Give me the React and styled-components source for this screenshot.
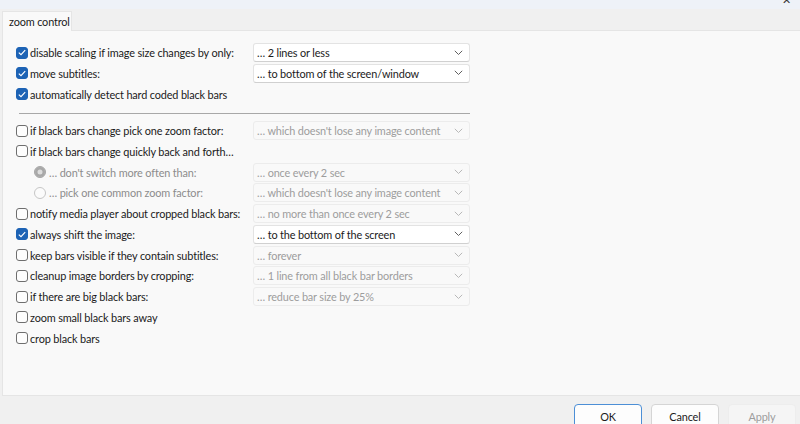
import React from 'react'
import styled, { createGlobalStyle } from 'styled-components'

const GlobalStyle = createGlobalStyle`
  html, body { margin: 0; padding: 0; }
  body {
    width: 800px;
    height: 424px;
    overflow: hidden;
    background: #f0f0f0;
    font-family: Lato, "Liberation Sans", sans-serif;
    font-size: 10.9px;
    letter-spacing: -0.15px;
    color: #1b1b1b;
  }
`

const rows = [
    { id: 0, kind: 'check', checked: true, label: 'disable scaling if image size changes by only:', value: '… 2 lines or less' },
    { id: 1, kind: 'check', checked: true, label: 'move subtitles:', value: '… to bottom of the screen/window' },
    { id: 2, kind: 'check', checked: true, label: 'automatically detect hard coded black bars' },
    { id: 3, kind: 'sep' },
    { id: 4, kind: 'check', label: 'if black bars change pick one zoom factor:', value: "… which doesn't lose any image content", disabled: true },
    { id: 5, kind: 'check', label: 'if black bars change quickly back and forth…' },
    { id: 6, kind: 'radio', checked: true, label: "… don't switch more often than:", value: '… once every 2 sec', disabled: true },
    { id: 7, kind: 'radio', label: '… pick one common zoom factor:', value: "… which doesn't lose any image content", disabled: true },
    { id: 8, kind: 'check', label: 'notify media player about cropped black bars:', value: '… no more than once every 2 sec', disabled: true },
    { id: 9, kind: 'check', checked: true, label: 'always shift the image:', value: '… to the bottom of the screen' },
    { id: 10, kind: 'check', label: 'keep bars visible if they contain subtitles:', value: '… forever', disabled: true },
    { id: 11, kind: 'check', label: 'cleanup image borders by cropping:', value: '… 1 line from all black bar borders', disabled: true },
    { id: 12, kind: 'check', label: 'if there are big black bars:', value: '… reduce bar size by 25%', disabled: true },
    { id: 13, kind: 'check', label: 'zoom small black bars away' },
    { id: 14, kind: 'check', label: 'crop black bars' },
]

function Chevron({ disabled }) {
    return (
        <svg width="9" height="6" viewBox="0 0 9 6">
            <path d="M0.8 0.8 L4.5 4.5 L8.2 0.8" fill="none" stroke={disabled ? '#b8b8b8' : '#5f5f5f'} strokeWidth="1" />
        </svg>
    )
}

function App() {
    return (
        <>
            <GlobalStyle />
            <Window>
                <TitleBar>
                    <Close>✕</Close>
                </TitleBar>
                <Tabs>
                    <Tab>zoom control</Tab>
                </Tabs>
                <Panel>
                    <Form>
                        {
                            rows.map((row) => {
                                const { id, kind, checked, label, value, disabled } = row
                                if (kind === 'sep') return <Separator key={id} />
                                return (
                                    <Row key={id}>
                                        <Label $indent={kind === 'radio'} $disabled={kind === 'radio'}>
                                            {kind === 'radio'
                                                ? <Radio $checked={checked} />
                                                : <Check $checked={checked}>
                                                    {checked && (
                                                        <svg width="8" height="7" viewBox="0 0 8 7">
                                                            <path d="M0.8 3.6 L3 5.6 L7.2 1.2" fill="none" stroke="#fff" strokeWidth="1.2" />
                                                        </svg>
                                                    )}
                                                </Check>}
                                            <span>{label}</span>
                                        </Label>
                                        {value && (
                                            <Select $disabled={disabled}>
                                                <span>{value}</span>
                                                <Chevron disabled={disabled} />
                                            </Select>
                                        )}
                                    </Row>
                                )
                            })
                        }
                    </Form>
                </Panel>
                <Footer>
                    <Button $default>OK</Button>
                    <Button>Cancel</Button>
                    <Button $disabled>Apply</Button>
                </Footer>
            </Window>
        </>
    )
}

export default App

const Window = styled.div`
    width: 800px;
    height: 424px;
    display: flex;
    flex-direction: column;
    overflow: hidden;
`

const TitleBar = styled.div`
    height: 9px;
    flex-shrink: 0;
    background: #eef2f8;
    position: relative;
    overflow: hidden;
`

const Close = styled.span`
    position: absolute;
    right: 9px;
    top: -6px;
    font-size: 11px;
    line-height: 11px;
    color: #333;
`

const Tabs = styled.div`
    height: 21px;
    flex-shrink: 0;
    display: flex;
    align-items: flex-end;
    padding-left: 2px;
`

const Tab = styled.div`
    width: 70px;
    height: 20px;
    box-sizing: border-box;
    background: #f9f9f9;
    border: 1px solid #e5e5e5;
    border-bottom: none;
    padding-left: 6px;
    line-height: 19px;
    white-space: nowrap;
    margin-bottom: -1px;
    position: relative;
    z-index: 1;
`

const Panel = styled.div`
    flex: 1;
    margin-left: 2px;
    background: #f9f9f9;
    border: 1px solid #e5e5e5;
    border-right: none;
    padding: 12px 0 0 13px;
`

const Form = styled.div`
    width: 454px;
    display: flex;
    flex-direction: column;
    gap: 1.75px;
`

const Row = styled.div`
    display: grid;
    grid-template-columns: 237px 217px;
    height: 19px;
    align-items: center;
`

const Label = styled.label`
    display: flex;
    align-items: center;
    gap: 2px;
    padding-left: ${p => p.$indent ? '18px' : '0'};
    color: ${p => p.$disabled ? '#8c8c8c' : '#1b1b1b'};
    white-space: nowrap;
`

const Check = styled.span`
    flex-shrink: 0;
    width: 12px;
    height: 12px;
    box-sizing: border-box;
    border-radius: 3px;
    display: inline-flex;
    align-items: center;
    justify-content: center;
    background: ${p => p.$checked ? '#1d63b5' : '#fdfdfd'};
    border: 1px solid ${p => p.$checked ? '#1d63b5' : '#6e6e6e'};
`

const Radio = styled.span`
    flex-shrink: 0;
    width: 12px;
    height: 12px;
    box-sizing: border-box;
    border-radius: 50%;
    margin-right: 1px;
    background: ${p => p.$checked ? '#a8a8a8' : '#fbfbfb'};
    border: 1px solid ${p => p.$checked ? '#a8a8a8' : '#c6c6c6'};
    box-shadow: ${p => p.$checked ? 'inset 0 0 0 2.5px #a8a8a8, inset 0 0 0 6px #dcdcdc' : 'none'};
`

const Select = styled.div`
    height: 19px;
    box-sizing: border-box;
    display: flex;
    align-items: center;
    justify-content: space-between;
    padding: 0 6px 0 3px;
    border-radius: 3px;
    background: ${p => p.$disabled ? '#f9f9f9' : '#ffffff'};
    border: 1px solid ${p => p.$disabled ? '#ececec' : '#e3e3e3'};
    border-bottom-color: ${p => p.$disabled ? '#ececec' : '#d0d0d0'};
    color: ${p => p.$disabled ? '#9d9d9d' : '#1b1b1b'};
    white-space: nowrap;
`

const Separator = styled.div`
    height: 1px;
    background: #a8a8a8;
    margin: 8px 0 5px 3px;
`

const Footer = styled.div`
    height: 28px;
    flex-shrink: 0;
    box-sizing: border-box;
    display: flex;
    justify-content: flex-end;
    gap: 9px;
    padding: 8px 4px 0 0;
`

const Button = styled.div`
    width: 68px;
    height: 24px;
    flex-shrink: 0;
    box-sizing: border-box;
    border-radius: 4px;
    display: flex;
    align-items: center;
    justify-content: center;
    background: ${p => p.$disabled ? '#f5f5f5' : '#fdfdfd'};
    border: 1px solid ${p => p.$default ? '#4c8fd6' : p.$disabled ? '#ededed' : '#d5d5d5'};
    color: ${p => p.$disabled ? '#9d9d9d' : '#1b1b1b'};
`
